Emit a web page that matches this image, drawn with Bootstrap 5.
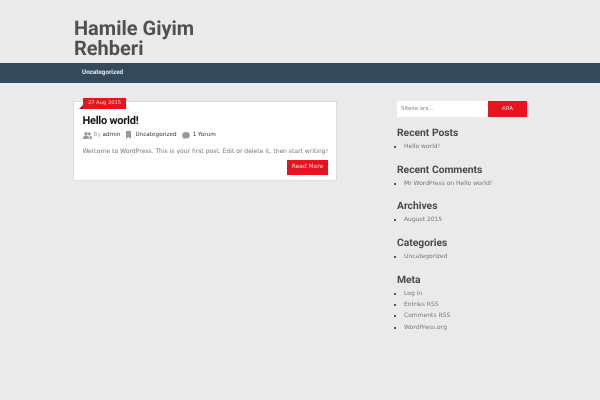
<!DOCTYPE html>
<html lang="tr"><head><meta charset="utf-8"><title>Hamile Giyim Rehberi</title>
<link href="https://cdn.jsdelivr.net/npm/bootstrap@5.3.0/dist/css/bootstrap.min.css" rel="stylesheet">
<style>
html,body{height:400px;overflow:hidden}
body{background:#eaeaea;font-family:"DejaVu Sans",sans-serif;font-size:6px;color:#777;line-height:11.3px;text-rendering:geometricPrecision}
.shell{width:454px;margin-left:73px;will-change:transform}
.masthead{height:63px;padding-top:18px}
.sitename{font:700 20px/20px Roboto,sans-serif;color:#505050;margin:0 0 0 1px;width:130px}
.menubar{background:#34495a;height:20px}
.menubar a{font:700 6.3px/19.500px Roboto,sans-serif;color:#e3e7ea;text-decoration:none;margin-left:9px}
.layout{margin-top:18px}
.maincol{width:264px}
.post{background:#fff;border:1px solid #ddd;height:80px;position:relative;padding:12px 8px 0 8.500px}
.datetag{position:absolute;left:9px;top:-4px;height:11px;width:43px;background:#e9121f;color:#fbdcdc;font-size:5.200px;line-height:11px;text-align:center}
.fold{position:absolute;left:5px;top:3px;width:0;height:0;border-left:4px solid transparent;border-bottom:4px solid #a5101a}
.posttitle{font:700 11px/14px Roboto,sans-serif;letter-spacing:-.25px;color:#111;margin:0}
.metaline{margin-top:1px;height:12px;font-size:5.700px;line-height:12px;color:#aaa}
.metaline b{font-weight:400;color:#333}
.metaline svg{display:block;flex:none}
.gap-by{margin-left:2px}
.gap-mark{margin-left:6px}
.gap-cat{margin-left:4px}
.gap-bubble{margin-left:5px}
.gap-count{margin-left:3px}
.excerpt{margin:5px 0 0;font-size:6.050px;line-height:11px;white-space:nowrap}
.readbtn{display:block;margin:3px 0 0 auto;width:41px;height:15px;background:#e9121f;color:#f8d8d8;font-size:5.900px;line-height:15px;text-align:center;text-decoration:none}
.sidecol{width:130px;margin-left:60px}
.searchrow{height:16px;margin-bottom:9px}
.searchbox{width:91px;background:#fff;color:#888;font-size:5.400px;line-height:16px;padding-left:4px}
.searchgo{width:39px;background:#e9121f;color:#f8d8d8;font-size:5.400px;line-height:16px;text-align:center}
.widgettitle{font:700 10.300px/14px Roboto,sans-serif;color:#4a4a4a;margin:0 0 1px}
.widgetlist{margin:0 0 10.400px;padding-left:7px;list-style:square;font-size:6px;line-height:11.300px}
.widgetlist li::marker{color:#555;font-size:6px}
</style></head><body>
<header class="masthead"><div class="shell"><h1 class="sitename">Hamile Giyim Rehberi</h1></div></header>
<nav class="menubar"><div class="shell"><a href="#">Uncategorized</a></div></nav>
<div class="shell d-flex align-items-start layout">
<main class="maincol flex-shrink-0"><article class="post">
<span class="datetag">27 Aug 2015</span><span class="fold"></span>
<h2 class="posttitle">Hello world!</h2>
<div class="metaline d-flex align-items-center">
<svg width="9" height="7" viewBox="0 0 9 7" fill="#999"><circle cx="3" cy="1.7" r="1.7"/><path d="M0 7c0-3 1-3.6 3-3.6S6 4 6 7z"/><circle cx="6.3" cy="1.7" r="1.5"/><path d="M6.800 7H9c0-2.600-1-3.400-2.600-3.400 .4 1 .4 2.200 .4 3.400z"/></svg>
<span class="gap-by">By <b>admin</b></span>
<svg class="gap-mark" width="5" height="8" viewBox="0 0 5 8" fill="#999"><path d="M0 0h5v8L2.500 6 0 8z"/></svg>
<b class="gap-cat">Uncategorized</b>
<svg class="gap-bubble" width="8" height="7" viewBox="0 0 8 7" fill="#999"><ellipse cx="4" cy="3.200" rx="3.800" ry="3.200"/><path d="M1.500 5l-.7 2 2.500-1z"/></svg>
<b class="gap-count">1 Yorum</b>
</div>
<p class="excerpt">Welcome to WordPress. This is your first post. Edit or delete it, then start writing!</p>
<a class="readbtn" href="#">Read More</a>
</article></main>
<aside class="sidecol flex-shrink-0">
<div class="searchrow d-flex"><div class="searchbox">Sitede ara...</div><div class="searchgo">ARA</div></div>
<h3 class="widgettitle">Recent Posts</h3><ul class="widgetlist"><li>Hello world!</li></ul>
<h3 class="widgettitle">Recent Comments</h3><ul class="widgetlist"><li>Mr WordPress on Hello world!</li></ul>
<h3 class="widgettitle">Archives</h3><ul class="widgetlist"><li>August 2015</li></ul>
<h3 class="widgettitle">Categories</h3><ul class="widgetlist"><li>Uncategorized</li></ul>
<h3 class="widgettitle">Meta</h3><ul class="widgetlist"><li>Log in</li><li>Entries RSS</li><li>Comments RSS</li><li>WordPress.org</li></ul>
</aside></div>
<script src="https://cdn.jsdelivr.net/npm/bootstrap@5.3.0/dist/js/bootstrap.bundle.min.js"></script>
</body></html>
